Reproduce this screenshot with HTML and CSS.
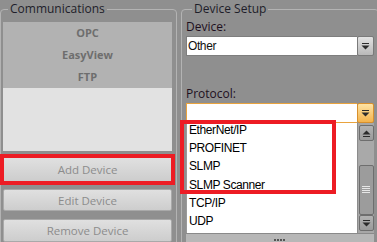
FILE: index.html
```html
<!DOCTYPE html>
<html lang="en">

<head>
    <meta charset="UTF-8">
    <title>Communications</title>
    <link rel="stylesheet" href="styles.css">
</head>

<body>
    <div class="screen">

        <fieldset class="group group-comm">
            <legend>Communications</legend>
            <ul class="comm-list">
                <li class="used">OPC</li>
                <li class="used">EasyView</li>
                <li class="used">FTP</li>
            </ul>
            <div class="btns">
                <button class="btn btn-add">Add Device</button>
                <button class="btn">Edit Device</button>
                <button class="btn">Remove Device</button>
            </div>
        </fieldset>

        <fieldset class="group group-setup">
            <legend>Device Setup</legend>
            <div class="field-label">Device:</div>
            <div class="combo">
                <span class="combo-value">Other</span>
                <span class="combo-arrow">
                    <svg width="9" height="7" viewBox="0 0 9 7"><rect x="1" y="0" width="7" height="1" fill="#2b2b2b"/><path d="M0.5 2.5 H8.5 L4.5 6.5 Z" fill="#2b2b2b"/></svg>
                </span>
            </div>

            <div class="field-label label-proto">Protocol:</div>
            <div class="combo combo-open">
                <span class="combo-value"></span>
                <span class="combo-arrow">
                    <svg width="9" height="7" viewBox="0 0 9 7"><rect x="1" y="0" width="7" height="1" fill="#2b2b2b"/><path d="M0.5 2.5 H8.5 L4.5 6.5 Z" fill="#2b2b2b"/></svg>
                </span>
            </div>

            <div class="dropdown">
                <ul class="options">
                    <li>EtherNet/IP</li>
                    <li>PROFINET</li>
                    <li>SLMP</li>
                    <li>SLMP Scanner</li>
                    <li>TCP/IP</li>
                    <li>UDP</li>
                </ul>
                <div class="scrollbar">
                    <div class="sb-btn">
                        <svg width="9" height="7" viewBox="0 0 9 7"><path d="M4.5 0.5 L8.5 4.5 H0.5 Z" fill="#2b2b2b"/><rect x="1" y="6" width="7" height="1" fill="#2b2b2b"/></svg>
                    </div>
                    <div class="sb-track"></div>
                    <div class="sb-thumb">
                        <svg width="8" height="8" viewBox="0 0 8 8"><g fill="#e6e6e6"><rect y="0" width="8" height="1"/><rect y="2" width="8" height="1"/><rect y="4" width="8" height="1"/><rect y="6" width="8" height="1"/></g></svg>
                    </div>
                    <div class="sb-btn">
                        <svg width="9" height="7" viewBox="0 0 9 7"><rect x="1" y="0" width="7" height="1" fill="#2b2b2b"/><path d="M0.5 2.5 H8.5 L4.5 6.5 Z" fill="#2b2b2b"/></svg>
                    </div>
                </div>
            </div>
            <div class="resize-bar">
                <svg width="12" height="2" viewBox="0 0 12 2"><g fill="#555"><rect x="0" width="2" height="2"/><rect x="3" width="2" height="2"/><rect x="6" width="2" height="2"/><rect x="9" width="2" height="2"/></g></svg>
            </div>
        </fieldset>

        <!-- annotation frame over the first options -->
        <div class="mark"></div>
    </div>
</body>

</html>
```

FILE: styles.css
```css
body {
    margin: 0;
    background: #8f8f8f;
    font-family: "Open Sans", "Liberation Sans", sans-serif;
    font-size: 11px;
    overflow: hidden;
}

.screen {
    position: relative;
    width: 377px;
    height: 242px;
    overflow: hidden;
    display: flex;
    align-items: flex-start;
    gap: 4px;
}

/* ---------- group boxes ---------- */
.group {
    margin: 1px 0 0 0;
    border: 1px solid #b3b3b3;
    border-radius: 4px;
    height: 300px;
    flex-shrink: 0;
}

.group legend {
    font-size: 12px;
    line-height: 16px;
    color: #1e1e2a;
    padding: 0 2px;
}

.group-comm {
    width: 177px;
    box-sizing: border-box;
    padding: 5px 4px 0 2px;
}

.group-comm legend {
    margin-left: 5px;
}

.group-setup {
    width: 197px;
    box-sizing: border-box;
    padding: 0 4px 0 4px;
}

.group-setup legend {
    margin-left: 6px;
}

/* ---------- communications list ---------- */
.comm-list {
    list-style: none;
    margin: 0;
    padding: 0;
    height: 129px;
    background: #e2e2e2;
}

.comm-list li {
    height: 22px;
    line-height: 22px;
    text-align: center;
    font-weight: bold;
    color: #6e6e6e;
}

.comm-list li.used {
    background: #b2b2b2;
}

.btns {
    display: flex;
    flex-direction: column;
    gap: 7px;
    margin-top: 6px;
}

.btn {
    font-family: "Open Sans", "Liberation Sans", sans-serif;
    font-size: 11.5px;
    color: #8c8c8c;
    height: 22px;
    padding: 0;
    border: 1px solid #a9a9a9;
    border-radius: 2px;
    background: linear-gradient(#e0e0e0, #cdcdcd);
}

.btn-add {
    height: 25px;
    border-radius: 0;
    outline: 4px solid #ed1c24;
    outline-offset: -1px;
}

.btns .btn:last-child {
    margin-top: 1px;
    height: 23px;
}

/* ---------- device setup ---------- */
.field-label {
    font-size: 12px;
    line-height: 16px;
    color: #1e0f1e;
    margin-top: 2px;
}

.label-proto {
    margin-top: 30px;
}

.combo {
    display: flex;
    height: 20px;
    margin-top: 1px;
    width: 188px;
}

.combo-value {
    flex: 1;
    background: #fff;
    border: 1px solid #7e7e7e;
    border-right: none;
    font-family: "Liberation Sans", Arial, sans-serif;
    font-size: 12px;
    letter-spacing: -0.4px;
    line-height: 18px;
    padding-left: 1px;
    color: #111;
}

.combo-arrow {
    width: 15px;
    display: flex;
    align-items: center;
    justify-content: center;
    border: 1px solid #7a7a7a;
    border-radius: 2px;
    background: linear-gradient(#e2e2e2, #b9b9b9);
}

.combo-open .combo-value {
    border-color: #e9a33e;
}

.combo-open .combo-arrow {
    border-color: #d8902c;
    background: linear-gradient(#fde3a4, #f4b34c);
}

.dropdown {
    display: flex;
    width: 188px;
    height: 110px;
    background: #fff;
    border-left: 1px solid #9a9a9a;
    box-sizing: border-box;
}

.options {
    flex: 1;
    list-style: none;
    margin: -2px 0 0 0;
    padding: 0 0 0 2px;
    font-family: "Liberation Sans", Arial, sans-serif;
    font-size: 12px;
    letter-spacing: -0.4px;
    color: #000;
}

.options li {
    height: 18.2px;
    line-height: 18.2px;
}

.scrollbar {
    width: 17px;
    background: #a7a7a7;
    display: flex;
    flex-direction: column;
    align-items: center;
    padding: 2px 0 2px;
    box-sizing: border-box;
    border-left: 1px solid #8c8c8c;
}

.sb-btn {
    width: 15px;
    height: 16px;
    flex-shrink: 0;
    box-sizing: border-box;
    border: 1px solid #6e6e6e;
    border-radius: 2px;
    background: linear-gradient(#b2b2b2, #9a9a9a);
    display: flex;
    align-items: center;
    justify-content: center;
}

.sb-track {
    height: 24px;
    width: 15px;
    background: #a9a9a9;
}

.sb-thumb {
    flex: 1;
    width: 15px;
    box-sizing: border-box;
    border: 1px solid #6e6e6e;
    border-radius: 2px;
    background: #9c9c9c;
    display: flex;
    align-items: center;
    justify-content: center;
}

.resize-bar {
    width: 188px;
    height: 11px;
    background: #b7b7b7;
    border-top: 1px solid #8a8a8a;
    display: flex;
    align-items: center;
    justify-content: center;
}

/* ---------- annotation ---------- */
.mark {
    position: absolute;
    left: 180px;
    top: 120px;
    width: 148px;
    height: 66px;
    border: 4px solid #ed1c24;
}
```
